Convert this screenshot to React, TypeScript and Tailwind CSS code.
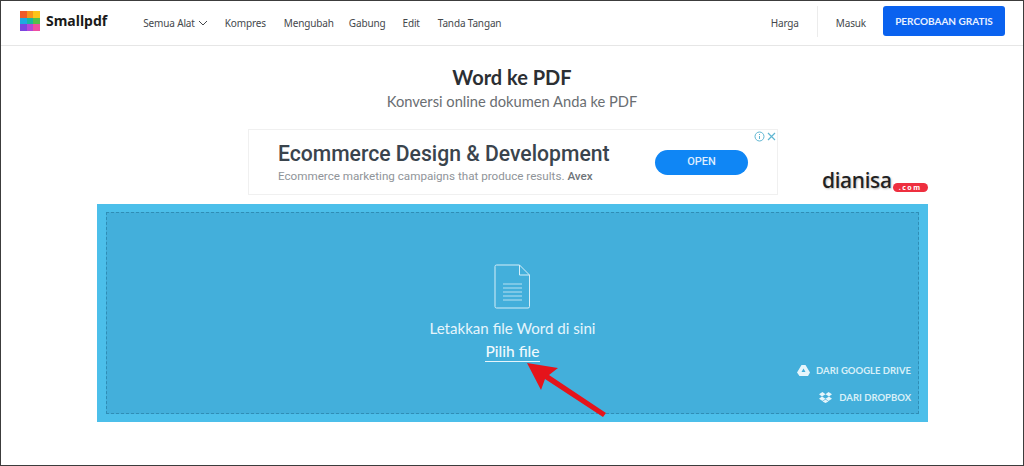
const font = "[font-family:'Lato',sans-serif]";

function Logo() {
  return (
    <svg width="20" height="20" viewBox="0 0 20 20" className="shrink-0">
      <rect x="0" y="0" width="7" height="7" fill="#ef5a2a" />
      <rect x="7" y="0" width="6" height="7" fill="#f7941d" />
      <rect x="13" y="0" width="7" height="7" fill="#fcc419" />
      <rect x="0" y="7" width="7" height="6" fill="#1fa8e0" />
      <rect x="7" y="7" width="6" height="6" fill="#18b7a0" />
      <rect x="13" y="7" width="7" height="6" fill="#55c04a" />
      <rect x="0" y="13" width="7" height="7" fill="#7a45e0" />
      <rect x="7" y="13" width="6" height="7" fill="#b447d8" />
      <rect x="13" y="13" width="7" height="7" fill="#ee4fa0" />
    </svg>
  );
}

function NavLink({ children, className = "" }: { children: React.ReactNode; className?: string }) {
  return (
    <span className={`text-[10px] leading-none tracking-[-0.15px] text-[#44484c] whitespace-nowrap [font-family:'Noto_Sans',sans-serif] ${className}`}>
      {children}
    </span>
  );
}

function Header() {
  return (
    <header className="flex h-[45px] shrink-0 items-center border-b border-[#e6e6e6] pb-[4px] pl-[19px] pr-[18px]">
      <Logo />
      <span className="ml-[6px] text-[14px] font-bold leading-none text-[#1a1a1a] [font-family:'Noto_Sans',sans-serif]">Smallpdf</span>
      <nav className="ml-[36px] mt-[3px] flex items-center">
        <NavLink>Semua Alat</NavLink>
        <svg width="10" height="6" viewBox="0 0 10 6" fill="none" stroke="#44484c" strokeWidth="1" className="ml-[3px]">
          <path d="M1 1l4 4 4-4" />
        </svg>
        <NavLink className="ml-[17px]">Kompres</NavLink>
        <NavLink className="ml-[18px]">Mengubah</NavLink>
        <NavLink className="ml-[15px]">Gabung</NavLink>
        <NavLink className="ml-[17px]">Edit</NavLink>
        <NavLink className="ml-[18px]">Tanda Tangan</NavLink>
      </nav>
      <div className="ml-auto flex items-center">
        <NavLink className="mt-[3px]">Harga</NavLink>
        <div className="ml-[18px] h-[31px] w-px bg-[#ececec]" />
        <NavLink className="ml-[18px] mt-[3px]">Masuk</NavLink>
        <button className="ml-[17px] flex h-[30px] w-[122px] items-center justify-center rounded-[3px] bg-[#0a62ef] text-[10px] font-bold text-[#e8f0ff]">
          PERCOBAAN GRATIS
        </button>
      </div>
    </header>
  );
}

function Ad() {
  return (
    <div className="relative ml-[247px] mt-[18px] flex h-[66px] w-[530px] items-center border border-[#f0f0f0] pl-[29px] pr-[29px] [font-family:Roboto,sans-serif]">
      <div className="flex-1">
        <div className="text-[21.15px] font-medium leading-[26px] text-[#3a444d]">Ecommerce Design &amp; Development</div>
        <div className="mt-[2px] text-[11.65px] leading-[14px] text-[#8f9499]">
          Ecommerce marketing campaigns that produce results. <span className="font-medium text-[#6f7479]">Avex</span>
        </div>
      </div>
      <div className="flex h-[25px] w-[93px] items-center justify-center rounded-full bg-[#0f86f5] text-[11px] font-medium text-[#dcecff]">
        OPEN
      </div>
      <div className="absolute right-[1px] top-[1px] flex items-center gap-[2px]">
        <svg width="11" height="11" viewBox="0 0 11 11" fill="none" stroke="#5fb6d2">
          <circle cx="5.5" cy="5.5" r="4.5" />
          <path d="M5.5 5v3M5.5 3v1" />
        </svg>
        <svg width="9" height="9" viewBox="0 0 9 9" fill="none" stroke="#5fb6d2" strokeWidth="1.2">
          <path d="M1 1l7 7M8 1l-7 7" />
        </svg>
      </div>
    </div>
  );
}

function Dropzone() {
  return (
    <div className="ml-[96px] mt-[9px] flex h-[218px] w-[831px] bg-[#4cbfea] px-[9px] py-[8px]">
      <div className="relative flex flex-1 flex-col items-center border border-dashed border-[#2f8db5] bg-[#43afdb] pt-[51px] text-[#e6f5fb]">
        <svg width="37" height="45" viewBox="0 0 37 45" fill="none" stroke="#d5eef8" strokeWidth="1">
          <path d="M2.500 1h23l10 10v31.500a1.500 1.500 0 0 1-1.500 1.500H2.500A1.500 1.500 0 0 1 1 42.500V2.500A1.500 1.500 0 0 1 2.500 1z" />
          <path d="M25.500 1v10h10" />
          <path d="M9 20h19M9 24h19M9 28h19M9 32h19M9 36h19" strokeWidth="0.8" />
        </svg>
        <div className="mt-[9px] text-[15.1px] leading-[20px]">Letakkan file Word di sini</div>
        <div className="mt-[4px] border-b border-[#e6f5fb] text-[15.5px] font-medium leading-[19px] text-[#f0f9fd]">Pilih file</div>
        <div className="absolute bottom-[37px] right-[7px] flex items-center gap-[6px] text-[9.5px] font-bold leading-none text-[#d8eff8]">
          <svg width="13" height="11" viewBox="0 0 13 11" fill="#e6f5fb">
            <path d="M4.500 0h4l4.500 7.500-2 3.500H2.500L0 7.500zM6.500 3.500L4.500 7h4z" fillRule="evenodd" />
          </svg>
          DARI GOOGLE DRIVE
        </div>
        <div className="absolute bottom-[10px] right-[7px] flex items-center gap-[7px] text-[9.5px] font-bold leading-none text-[#d8eff8]">
          <svg width="13" height="11" viewBox="0 0 13 11" fill="#e6f5fb">
            <path d="M3.500 0L0 2.300l3 2.200L6.500 2.300zM9.500 0L6.500 2.300 10 4.500l3-2.200zM0 6.700L3.500 9l3-2.200L3 4.500zM13 6.700L9.500 9l-3-2.200L10 4.500zM6.500 7.500L3.500 9.500 6.500 11l3-1.500z" />
          </svg>
          DARI DROPBOX
        </div>
      </div>
    </div>
  );
}

export default function App() {
  return (
    <div className={`relative flex h-[466px] w-[1024px] flex-col overflow-hidden border border-[#3c3c3c] bg-white ${font}`}>
      <Header />
      <div className="mt-[18px] text-center text-[20px] font-bold leading-[26px] text-[#2c2f33]">Word ke PDF</div>
      <div className="mt-[1px] text-center text-[14.7px] leading-[20px] text-[#6a6e72]">Konversi online dokumen Anda ke PDF</div>
      <Ad />
      <Dropzone />
      <div className="absolute left-[821px] top-[167px] flex items-end [font-family:'Noto_Sans',sans-serif]">
        <span className="text-[21px] font-medium leading-[24px] tracking-[-0.3px] text-[#222] [text-shadow:1px_1px_2px_rgba(0,0,0,0.25)]">dianisa</span>
        <span className="ml-[1px] flex h-[9px] w-[35px] items-center justify-center rounded-full bg-[#ee2f3f] text-[7px] font-bold leading-none tracking-[1.5px] text-white">.com</span>
      </div>
      <svg width="90" height="70" viewBox="0 0 90 70" className="absolute left-[519px] top-[354px]">
        <path d="M7 8L38 13 29 20 86 58 83 62 25 24 21 35z" fill="#e5141b" />
      </svg>
    </div>
  );
}
